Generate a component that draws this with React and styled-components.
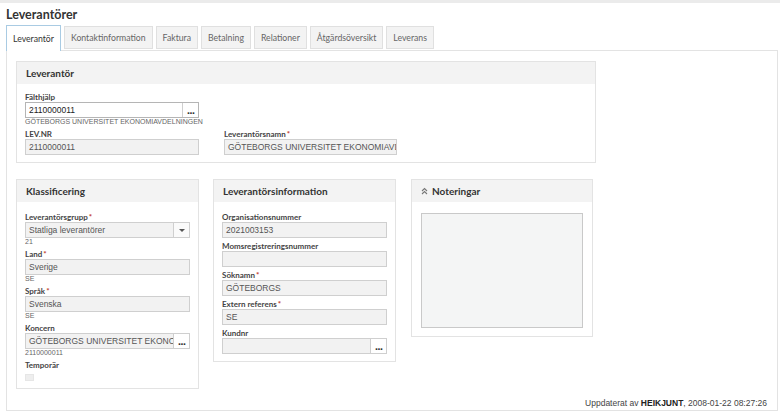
import React from "react";
import styled, { createGlobalStyle } from "styled-components";

const COLORS = {
    text: "#333",
    muted: "#555",
    border: "#e3e3e3",
    inputBorder: "#cfcfcf",
    inputBg: "#f2f2f2",
    headerBg: "#f3f3f3",
    required: "#c0392b",
    activeTab: "#a9cbe3",
};

const TABS = [
    "Leverantör",
    "Kontaktinformation",
    "Faktura",
    "Betalning",
    "Relationer",
    "Åtgärdsöversikt",
    "Leverans",
];

const GlobalStyle = createGlobalStyle`
    html, body {
        margin: 0;
        padding: 0;
        background: #fff;
    }
    body {
        font-family: Lato, "Open Sans", sans-serif;
        color: ${COLORS.text};
    }
    * {
        box-sizing: border-box;
    }
`;

const Field = ({ label, required, value, sub, button, select, editable }) => (
    <FieldWrapper>
        <Label>
            {label}
            {required && <Star>*</Star>}
        </Label>
        <InputBox $editable={editable}>
            <InputText>{value}</InputText>
            {button && <DotsButton>...</DotsButton>}
            {select && (
                <CaretButton>
                    <Caret />
                </CaretButton>
            )}
        </InputBox>
        {sub && <Sub>{sub}</Sub>}
    </FieldWrapper>
);

const Section = ({ title, icon, width, bodyPad, children }) => (
    <SectionBox style={{ width }}>
        <SectionHeader>
            {icon && (
                <svg width="7" height="8" viewBox="0 0 7 8">
                    <polyline points="1,4 3.5,1.5 6,4" fill="none" stroke="#777" strokeWidth="1.1" />
                    <polyline points="1,7 3.5,4.5 6,7" fill="none" stroke="#777" strokeWidth="1.1" />
                </svg>
            )}
            {title}
        </SectionHeader>
        <SectionBody $pad={bodyPad}>{children}</SectionBody>
    </SectionBox>
);

const App = () => {
    return (
        <>
            <GlobalStyle />
            <Page>
                <TopStrip />
                <Title>Leverantörer</Title>
                <TabBar>
                    {TABS.map((tab, i) => (
                        <Tab key={tab} $active={i === 0}>
                            {tab}
                        </Tab>
                    ))}
                </TabBar>
                <Panel>
                    <Section title="Leverantör" width={580} bodyPad="8px 8px 4px">
                        <TwoCols>
                            <Field
                                label="Fälthjälp"
                                value="2110000011"
                                editable
                                button
                                sub="GÖTEBORGS UNIVERSITET EKONOMIAVDELNINGEN"
                            />
                            <div />
                            <Field label="LEV.NR" value="2110000011" />
                            <Field
                                label="Leverantörsnamn"
                                required
                                value="GÖTEBORGS UNIVERSITET EKONOMIAVDELNINGEN"
                            />
                        </TwoCols>
                    </Section>
                    <SectionRow>
                        <Section title="Klassificering" width={183} bodyPad="10px 8px 7px">
                            <Field
                                label="Leverantörsgrupp"
                                required
                                value="Statliga leverantörer"
                                select
                                sub="21"
                            />
                            <Field label="Land" required value="Sverige" sub="SE" />
                            <Field label="Språk" required value="Svenska" sub="SE" />
                            <Field
                                label="Koncern"
                                value="GÖTEBORGS UNIVERSITET EKONOMIAVDELNINGEN"
                                button
                                sub="2110000011"
                            />
                            <Label>Temporär</Label>
                            <CheckBox />
                        </Section>
                        <Section title="Leverantörsinformation" width={183} bodyPad="10px 8px 7px">
                            <Field label="Organisationsnummer" value="2021003153" />
                            <Field label="Momsregistreringsnummer" value="" />
                            <Field label="Söknamn" required value="GÖTEBORGS" />
                            <Field label="Extern referens" required value="SE" />
                            <Field label="Kundnr" value="" button />
                        </Section>
                        <Section title="Noteringar" icon width={182} bodyPad="11px 9px 8px">
                            <NotesArea />
                        </Section>
                    </SectionRow>
                    <Footer>
                        Uppdaterat av <strong>HEIKJUNT</strong>, 2008-01-22 08:27:26
                    </Footer>
                </Panel>
            </Page>
        </>
    );
};

const Page = styled.div`
    width: 780px;
    height: 412px;
    display: flex;
    flex-direction: column;
    overflow: hidden;
`;

const TopStrip = styled.div`
    height: 3px;
    background: #ebebeb;
`;

const Title = styled.h1`
    margin: 4px 0 2px 6px;
    font-size: 12.5px;
    line-height: 16px;
    font-weight: 700;
    color: #333;
`;

const TabBar = styled.div`
    display: flex;
    align-items: flex-start;
    gap: 3px;
    height: 25px;
    padding-left: 6px;
    position: relative;
    z-index: 1;
`;

const Tab = styled.div`
    height: ${(p) => (p.$active ? "26px" : "23px")};
    margin-top: ${(p) => (p.$active ? "0" : "1px")};
    padding: 0 6px;
    display: flex;
    align-items: center;
    font-size: 8.7px;
    color: ${(p) => (p.$active ? "#333" : "#666")};
    background: ${(p) => (p.$active ? "#fff" : "#f3f3f3")};
    border: 1px solid ${(p) => (p.$active ? COLORS.activeTab : "#e0e0e0")};
    border-bottom: ${(p) => (p.$active ? "none" : "1px solid #e0e0e0")};
`;

const Panel = styled.div`
    margin: 0 2px 0 6px;
    height: 361px;
    border: 1px solid ${COLORS.border};
    padding: 10px 9px 2px;
    display: flex;
    flex-direction: column;
`;

const SectionRow = styled.div`
    display: flex;
    align-items: flex-start;
    gap: 14px;
    margin-top: 16px;

    & > div:last-child {
        margin-left: 1px;
    }
`;

const SectionBox = styled.div`
    border: 1px solid ${COLORS.border};
    background: #fff;
`;

const SectionHeader = styled.div`
    height: 22px;
    display: flex;
    align-items: center;
    gap: 4px;
    padding: 0 9px;
    background: ${COLORS.headerBg};
    font-size: 10px;
    font-weight: 700;
    color: #333;
`;

const SectionBody = styled.div`
    padding: ${(p) => p.$pad};
`;

const TwoCols = styled.div`
    display: grid;
    grid-template-columns: 174px 173px;
    column-gap: 25px;
`;

const FieldWrapper = styled.div`
    margin-bottom: 3px;
    min-width: 0;

    &:last-child {
        margin-bottom: 0;
    }
`;

const Label = styled.div`
    font-size: 8px;
    line-height: 10px;
    font-weight: 700;
    color: #444;
    white-space: nowrap;
`;

const Star = styled.span`
    color: ${COLORS.required};
    margin-left: 1px;
`;

const InputBox = styled.div`
    height: 16px;
    display: flex;
    border: 1px solid ${(p) => (p.$editable ? "#b5b5b5" : COLORS.inputBorder)};
    background: ${(p) => (p.$editable ? "#fff" : COLORS.inputBg)};
    font-family: "Liberation Sans", Arial, sans-serif;
    font-size: 8.5px;
    color: ${(p) => (p.$editable ? "#222" : COLORS.muted)};
`;

const InputText = styled.div`
    flex: 1;
    min-width: 0;
    padding: 0 3px;
    line-height: 14px;
    white-space: nowrap;
    overflow: hidden;
`;

const DotsButton = styled.div`
    width: 16px;
    flex-shrink: 0;
    border-left: 1px solid ${COLORS.inputBorder};
    background: #fff;
    color: #333;
    font-family: "DejaVu Sans", sans-serif;
    font-size: 9px;
    font-weight: 700;
    line-height: 17px;
    text-align: center;
    letter-spacing: -1px;
`;

const CaretButton = styled.div`
    width: 16px;
    flex-shrink: 0;
    border-left: 1px solid ${COLORS.inputBorder};
    background: #fafafa;
    display: flex;
    align-items: center;
    justify-content: center;
`;

const Caret = styled.span`
    width: 0;
    height: 0;
    border-left: 3px solid transparent;
    border-right: 3px solid transparent;
    border-top: 3px solid #555;
`;

const Sub = styled.div`
    font-family: "Liberation Sans", Arial, sans-serif;
    font-size: 7px;
    line-height: 8px;
    color: #666;
    white-space: nowrap;
`;

const CheckBox = styled.div`
    width: 9px;
    height: 7px;
    margin-top: 4px;
    background: #eeeeee;
    border: 1px solid #e6e6e6;
`;

const NotesArea = styled.div`
    height: 115px;
    border: 1px solid #c9c9c9;
    background: #f4f5f5;
`;

const Footer = styled.div`
    margin-top: auto;
    padding-right: 1px;
    text-align: right;
    font-family: "Liberation Sans", Arial, sans-serif;
    font-size: 8.5px;
    line-height: 10px;
    color: #444;

    strong {
        color: #222;
    }
`;

export default App;
